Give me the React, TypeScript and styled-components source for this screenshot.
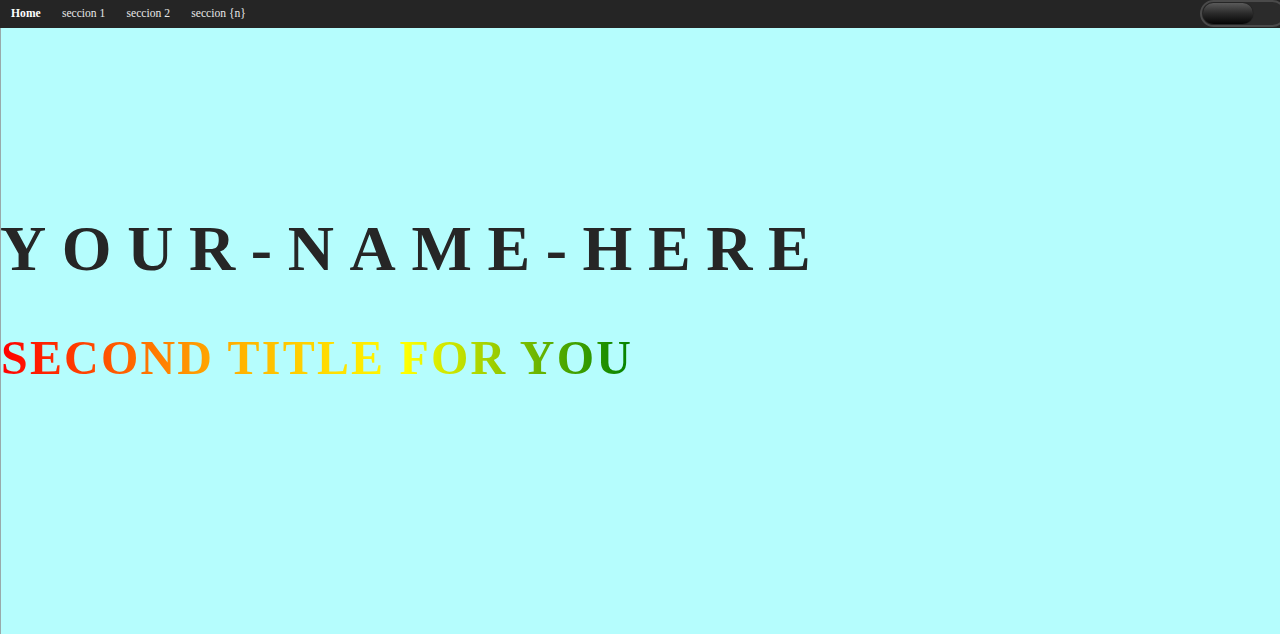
import React from "react";
import styled, { createGlobalStyle } from "styled-components";

const GlobalStyle = createGlobalStyle`
  html, body {
    margin: 0;
    padding: 0;
    background: #b5fdfd;
    font-family: "Liberation Serif", "Times New Roman", serif;
  }
  * { box-sizing: border-box; }
`;

const Page = styled.div`
  min-height: 634px;
  display: flex;
  flex-direction: column;
  background: #b5fdfd;
`;

const NavBar = styled.nav`
  height: 28px;
  background: #252525;
  display: flex;
  align-items: center;
  justify-content: space-between;
  padding-left: 0.5px;
`;

const NavLinks = styled.div`
  display: flex;
  align-items: center;
  height: 100%;
`;

const NavLink = styled.a<{ $active?: boolean }>`
  padding: 0 10.6px 1px;
  font-size: 11.6px;
  font-weight: ${(p) => (p.$active ? 700 : 400)};
  color: ${(p) => (p.$active ? "#ffffff" : "#e8e8e8")};
  text-decoration: none;
  cursor: pointer;
`;

const Toggle = styled.div`
  width: 86px;
  height: 27px;
  margin-right: -6px;
  margin-top: -1px;
  border-radius: 14px;
  border: 2px solid #4a4a4a;
  background: #2b2b2b;
  display: flex;
  align-items: center;
  padding-left: 1px;
`;

const Knob = styled.div`
  width: 50px;
  height: 21px;
  border-radius: 11px;
  background: linear-gradient(to bottom, #5a5a5a 0%, #2a2a2a 50%, #050505 100%);
  box-shadow: 0 0 1px #000;
`;

const Main = styled.main`
  flex: 1;
  border-left: 1px solid #9aa;
  padding-top: 189px;
  display: flex;
  flex-direction: column;
  align-items: flex-start;
`;

const Title = styled.h1`
  margin: 0;
  margin-left: -1px;
  font-size: 64px;
  line-height: 64px;
  font-weight: 700;
  letter-spacing: 15.6px;
  color: #262626;
`;

const Subtitle = styled.h2`
  margin: 53px 0 0 0;
  font-size: 48px;
  line-height: 48px;
  font-weight: 700;
  letter-spacing: 2.2px;
  background: linear-gradient(to right, #ff0000 0%, #ffa500 33%, #ffff00 64%, #008000 100%);
  -webkit-background-clip: text;
  background-clip: text;
  color: transparent;
`;

export default function App() {
  return (
    <>
      <GlobalStyle />
      <Page>
        <NavBar>
          <NavLinks>
            <NavLink $active>Home</NavLink>
            <NavLink>seccion 1</NavLink>
            <NavLink>seccion 2</NavLink>
            <NavLink>seccion {"{n}"}</NavLink>
          </NavLinks>
          <Toggle>
            <Knob />
          </Toggle>
        </NavBar>
        <Main>
          <Title>YOUR-NAME-HERE</Title>
          <Subtitle>SECOND TITLE FOR YOU</Subtitle>
        </Main>
      </Page>
    </>
  );
}
